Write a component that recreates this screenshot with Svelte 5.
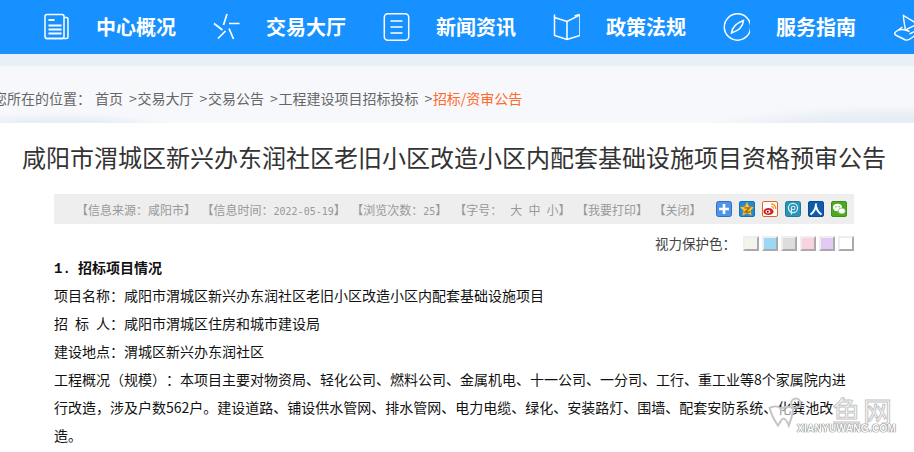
<script>
  const nav = ['中心概况', '交易大厅', '新闻资讯', '政策法规', '服务指南'];
  const crumbs = ['交易大厅', '交易公告', '工程建设项目招标投标'];
  const swatches = ['#f6f2ec', '#9cd8f6', '#dddddd', '#f8d3dd', '#e2c9f3', '#ffffff'];
</script>

<div class="page">
  <header class="nav">
    {#each nav as label, i}
      <a class="nav-item" href="#top">
        <svg class="nav-icon" viewBox="0 0 26 28" fill="none" stroke="#fff" stroke-width="1.5">
          {#if i === 0}
            <rect x="1.5" y="1.5" width="19" height="24" rx="2" />
            <path d="M20.5 4.5h2.5a1.5 1.5 0 0 1 1.500 1.500v18a1.500 1.500 0 0 1-1.500 1.500h-21" />
            <path d="M5 7h6M5 12.500h13M5 16.500h13M5 20.500h13" stroke-width="2" />
          {:else if i === 1}
            <path d="M13.500 1 10 12M0.500 10.500 9 17M26 10.500H15.500M15.500 15.500 20 26M12 18 4.500 25.500" stroke-width="1.700" />
          {:else if i === 2}
            <rect x="0.800" y="0.800" width="24.400" height="26.400" rx="3.500" />
            <path d="M7 8h12M7 14h12M7 20h12" />
          {:else if i === 3}
            <path d="M1 4.500 13.500 8.500 26.500 2V22.500L13.500 26.500 1 22.500ZM13.500 8.500V26.500" />
            <path d="M1 4.500V1.500M26 1.500 21 3" />
          {:else if i === 4}
            <circle cx="14" cy="14" r="13.200" />
            <path d="M8 20c.5-5 4-9.500 12-12.500-.5 5.500-4 10-12 12.500Z" />
          {/if}
        </svg>
        <span class="nav-label">{label}</span>
      </a>
    {/each}
    <svg class="nav-icon last" viewBox="0 0 26 28" fill="none" stroke="#fff" stroke-width="1.400">
      <path d="M10 2.500 24 11 12 17C11 12 10 7 10 2.500Z" />
      <path d="M9 14 2 19c-1.500 1.500-.5 3 1 3.500l9 4.500c2 .5 4-.5 6-2l8-6" />
      <path d="M5 17c4-1 8 0 11 1.500M16 21l10-5" />
    </svg>
  </header>

  <div class="band"></div>

  <div class="crumbs">
    <span class="here">您所在的位置：</span>
    <span>首页</span>
    {#each crumbs as c}
      <span class="crumb"><span class="sep">&gt;</span>{c}</span>
    {/each}
    <span class="crumb"><span class="sep">&gt;</span><em>招标/资审公告</em></span>
  </div>

  <main class="article">
    <h1>咸阳市渭城区新兴办东润社区老旧小区改造小区内配套基础设施项目资格预审公告</h1>

    <div class="meta">
      <span>【信息来源：咸阳市】</span>
      <span>【信息时间：<span class="mono">2022-05-19</span>】</span>
      <span>【浏览次数：<span class="mono">25</span>】</span>
      <span class="font-size">【字号：<span class="size first">大</span><span class="size">中</span><span class="size">小</span>】</span>
      <span>【我要打印】</span>
      <span>【关闭】</span>
      <div class="share">
        <svg class="share-icon" viewBox="0 0 16 16">
          <rect x=".5" y=".5" width="15" height="15" rx="2" fill="#4d94ea" stroke="#2f6fc4" />
          <path d="M8 3v10M3 8h10" stroke="#fff" stroke-width="2.600" />
        </svg>
        <svg class="share-icon" viewBox="0 0 16 16">
          <rect x=".5" y=".5" width="15" height="15" rx="1.500" fill="#1f8bd8" stroke="#1570b5" />
          <path d="M8 1.200 10.200 5.700 15 6.300 11.500 9.600 12.400 14.500 8 12.100 3.600 14.500 4.500 9.600 1 6.300 5.800 5.700Z" fill="#fbc82b" stroke="#e8961e" stroke-width=".5" />
          <path d="M5.500 6.800h5L6 11h5" fill="none" stroke="#a85f10" stroke-width="1.300" />
        </svg>
        <svg class="share-icon" viewBox="0 0 16 16">
          <rect x=".5" y=".5" width="15" height="15" rx="1.500" fill="#fff" stroke="#e8651e" />
          <ellipse cx="6.500" cy="10.500" rx="5" ry="3.600" fill="#d9202a" />
          <ellipse cx="6" cy="10.700" rx="2.400" ry="1.800" fill="#fff" />
          <circle cx="5.800" cy="10.800" r="1" fill="#222" />
          <path d="M9 3.200a4.500 4.500 0 0 1 4.800 4.800M9.300 5.500a2.200 2.200 0 0 1 2.200 2.300" fill="none" stroke="#f08a1d" stroke-width="1.200" />
        </svg>
        <svg class="share-icon" viewBox="0 0 16 16">
          <rect x=".5" y=".5" width="15" height="15" rx="2" fill="#2a94b8" stroke="#1c7a9b" />
          <circle cx="8" cy="7" r="4.600" fill="none" stroke="#d6f0f6" stroke-width="1.200" />
          <circle cx="8.200" cy="7" r="1.800" fill="none" stroke="#d6f0f6" stroke-width="1.100" />
          <path d="M6.400 7v6.500" stroke="#d6f0f6" stroke-width="1.200" />
        </svg>
        <svg class="share-icon" viewBox="0 0 16 16">
          <rect x=".5" y=".5" width="15" height="15" rx="1.500" fill="#0f5cad" stroke="#0c4b90" />
          <path d="M8 2.500C8 7 6 11 2.500 13.500M8 5.500C9 9 11 12 13.500 13.500" fill="none" stroke="#fff" stroke-width="2" />
        </svg>
        <svg class="share-icon" viewBox="0 0 16 16">
          <rect x=".5" y=".5" width="15" height="15" rx="1.500" fill="#4da81f" stroke="#3d8f16" />
          <ellipse cx="6.500" cy="6.500" rx="4.500" ry="3.700" fill="#fff" />
          <ellipse cx="10.800" cy="10" rx="3.600" ry="3" fill="#fff" stroke="#4da81f" stroke-width=".6" />
          <circle cx="5" cy="5.800" r=".7" fill="#4da81f" />
          <circle cx="8" cy="5.800" r=".7" fill="#4da81f" />
        </svg>
      </div>
    </div>

    <div class="guard">
      <span class="guard-label">视力保护色：</span>
      {#each swatches as s}
        <span class="swatch" style="background:{s}"></span>
      {/each}
    </div>

    <div class="body">
      <p class="head"><span class="num">1.</span>招标项目情况</p>
      <p>项目名称：咸阳市渭城区新兴办东润社区老旧小区改造小区内配套基础设施项目</p>
      <p>招&ensp;标&ensp;人：咸阳市渭城区住房和城市建设局</p>
      <p>建设地点：渭城区新兴办东润社区</p>
      <p>工程概况（规模）：本项目主要对物资局、轻化公司、燃料公司、金属机电、十一公司、一分司、工行、重工业等8个家属院内进行改造，涉及户数562户。建设道路、铺设供水管网、排水管网、电力电缆、绿化、安装路灯、围墙、配套安防系统、化粪池改造。</p>
    </div>
  </main>

  <div class="watermark" aria-hidden="true">
    <svg class="wm-logo" viewBox="0 0 44 44" fill="none" stroke="#c4c4c4" stroke-width="2.500">
      <path d="M2 14c6-3 12-2 15 1 5-3 11-3 16 0-1 7-3 14-6 22-2-5-4-9-7-9-3 0-4 5-7 9-5-7-9-15-11-23Z" fill="#fff" fill-opacity=".55" />
      <circle cx="36" cy="8" r="6" />
    </svg>
    <span class="wm-cn">鱼</span>
    <span class="wm-cn second">网</span>
    <span class="wm-en">XIANYUWANG.COM</span>
  </div>
</div>

<style>
  :global(body) {
    margin: 0;
    background: #fff;
    overflow: hidden;
  }

  .page {
    position: relative;
    width: 914px;
    height: 452px;
    overflow: hidden;
    font-family: "Noto Sans CJK SC", "Liberation Sans", sans-serif;
    color: #222;
    text-spacing-trim: space-all;
  }

  .nav {
    display: flex;
    align-items: center;
    height: 54px;
    padding-left: 43px;
    background: #1791ff;
  }

  .nav-item {
    display: flex;
    flex: 0 0 170px;
    align-items: center;
    gap: 26px;
    color: #fff;
    text-decoration: none;
  }

  .nav-icon {
    flex: 0 0 27px;
    width: 27px;
    height: 28px;
  }

  .nav-label {
    font-size: 20px;
    font-weight: 700;
    line-height: 54px;
    white-space: nowrap;
  }

  .band {
    height: 12px;
    background: #e7eff7;
  }

  .crumbs {
    box-sizing: border-box;
    display: flex;
    align-items: center;
    gap: 6px;
    height: 57px;
    padding-top: 6px;
    font-size: 14px;
    color: #666;
    white-space: nowrap;
    background:
      radial-gradient(ellipse 130px 22px at 60px 68px, #e6eef6 60%, rgba(230, 238, 246, 0) 100%),
      radial-gradient(ellipse 220px 34px at 900px 72px, #e7edf4 60%, rgba(231, 237, 244, 0) 100%),
      #f7f8fb;
  }

  .here {
    margin-left: -7px;
    margin-right: -2px;
  }

  .sep {
    margin-right: 0.700px;
  }

  .crumbs em {
    font-style: normal;
    color: #ff6a2a;
  }

  .article {
    padding: 0 60px 0 54px;
  }

  h1 {
    margin: 14px -40px 0;
    font-size: 24px;
    font-weight: 400;
    line-height: 40px;
    text-align: center;
    color: #333;
    white-space: nowrap;
  }

  .meta {
    display: flex;
    align-items: center;
    gap: 5.500px;
    height: 30px;
    margin-top: 17px;
    padding-left: 22px;
    font-size: 12px;
    color: #999;
    background: #eeeeee;
    white-space: nowrap;
  }

  .mono {
    font-family: "DejaVu Sans Mono", monospace;
    font-size: 10px;
  }

  .font-size {
    margin-left: 1.500px;
  }

  .size {
    margin-left: 6px;
  }

  .size.first {
    margin-left: 8px;
  }

  .share {
    display: flex;
    gap: 7px;
    margin-left: auto;
    padding-right: 7px;
  }

  .share-icon {
    display: block;
    width: 16px;
    height: 16px;
  }

  .guard {
    display: flex;
    justify-content: flex-end;
    align-items: center;
    gap: 3px;
    height: 26px;
    margin-top: 6px;
    font-size: 13.500px;
    color: #444;
  }

  .guard-label {
    margin-right: 4px;
  }

  .swatch {
    box-sizing: border-box;
    width: 16px;
    height: 15px;
    border: 2px solid #eeeeee;
    border-right-color: #aaaaaa;
    border-bottom-color: #aaaaaa;
  }

  .body {
    margin-top: -3px;
    font-size: 14px;
    line-height: 28px;
    color: #111;
  }

  .body p {
    margin: 0;
  }

  .head {
    font-weight: 700;
    color: #111;
  }

  .num {
    display: inline-block;
    width: 24px;
    line-height: 1;
    font-family: "Liberation Mono", monospace;
  }

  .watermark {
    position: absolute;
    left: 760px;
    top: 395px;
    width: 140px;
    height: 45px;
  }

  .wm-logo {
    position: absolute;
    left: 8px;
    top: 2px;
    width: 34px;
    height: 34px;
  }

  .wm-cn {
    position: absolute;
    left: 72px;
    top: 1px;
    font-size: 29px;
    line-height: 29px;
    color: #fff;
    -webkit-text-stroke: 1px #c4c4c4;
  }

  .wm-cn.second {
    left: 103px;
  }

  .wm-en {
    position: absolute;
    left: 37px;
    top: 29px;
    font-family: "Liberation Sans", sans-serif;
    font-size: 10px;
    font-weight: 700;
    line-height: 10px;
    letter-spacing: 0.300px;
    color: #fff;
    text-shadow: 0 0 1px #777, 0 0 1px #777, 0 0 1px #777;
  }
</style>
